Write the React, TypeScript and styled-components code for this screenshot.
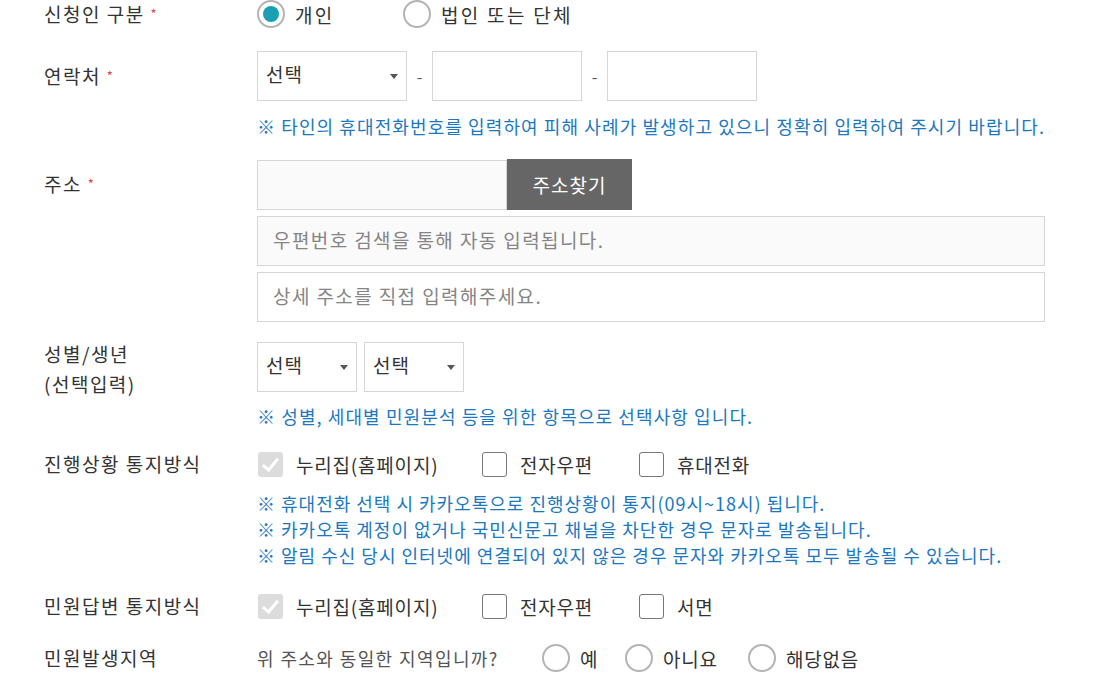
import styled, { createGlobalStyle } from "styled-components";

const GlobalStyle = createGlobalStyle`
  body {
    margin: 0;
    background: #fff;
    font-family: "Noto Sans CJK KR", "Noto Sans", sans-serif;
    color: #333;
  }
`;

export default function App() {
  return (
    <>
      <GlobalStyle />
      <Form>
        <Row $center>
          <Label>
            신청인 구분 <Star>*</Star>
          </Label>
          <Options>
            <Choice $width={146} $wide>
              <Radio $checked />
              개인
            </Choice>
            <Choice $wide>
              <Radio />
              법인 또는 단체
            </Choice>
          </Options>
        </Row>

        <Row $top={23}>
          <FieldLabel>
            연락처 <Star>*</Star>
          </FieldLabel>
          <Field>
            <Line>
              <Select $width={150}>선택</Select>
              <Dash>-</Dash>
              <Input $width={150} />
              <Dash>-</Dash>
              <Input $width={150} />
            </Line>
            <Hint $top={13}>
              ※ 타인의 휴대전화번호를 입력하여 피해 사례가 발생하고 있으니 정확히 입력하여 주시기 바랍니다.
            </Hint>
          </Field>
        </Row>

        <Row $top={21}>
          <FieldLabel>
            주소 <Star>*</Star>
          </FieldLabel>
          <Field>
            <Line>
              <Input $width={250} $grey />
              <FindButton>주소찾기</FindButton>
            </Line>
            <Input $grey $top={6}>우편번호 검색을 통해 자동 입력됩니다.</Input>
            <Input $top={6}>상세 주소를 직접 입력해주세요.</Input>
          </Field>
        </Row>

        <Row $top={20}>
          <TwoLineLabel>
            성별/생년
            <br />
            (선택입력)
          </TwoLineLabel>
          <Field>
            <Line $gap={7}>
              <Select $width={100}>선택</Select>
              <Select $width={100}>선택</Select>
            </Line>
            <Hint $top={12}>※ 성별, 세대별 민원분석 등을 위한 항목으로 선택사항 입니다.</Hint>
          </Field>
        </Row>

        <Row $top={22}>
          <Label>진행상황 통지방식</Label>
          <Field>
            <Options>
              <Choice $width={224}>
                <Check $disabled />
                누리집(홈페이지)
              </Choice>
              <Choice $width={157}>
                <Check />
                전자우편
              </Choice>
              <Choice>
                <Check />
                휴대전화
              </Choice>
            </Options>
            <Hints>
              <Hint $tight>※ 휴대전화 선택 시 카카오톡으로 진행상황이 통지(09시~18시) 됩니다.</Hint>
              <Hint $tight>※ 카카오톡 계정이 없거나 국민신문고 채널을 차단한 경우 문자로 발송됩니다.</Hint>
              <Hint $tight>※ 알림 수신 당시 인터넷에 연결되어 있지 않은 경우 문자와 카카오톡 모두 발송될 수 있습니다.</Hint>
            </Hints>
          </Field>
        </Row>

        <Row $top={24} $center>
          <Label>민원답변 통지방식</Label>
          <Options>
            <Choice $width={224}>
              <Check $disabled />
              누리집(홈페이지)
            </Choice>
            <Choice $width={157}>
              <Check />
              전자우편
            </Choice>
            <Choice>
              <Check />
              서면
            </Choice>
          </Options>
        </Row>

        <Row $top={24} $center>
          <Label>민원발생지역</Label>
          <Options>
            <Question>위 주소와 동일한 지역입니까?</Question>
            <Choice $width={83}>
              <Radio />
              예
            </Choice>
            <Choice $width={123}>
              <Radio />
              아니요
            </Choice>
            <Choice>
              <Radio />
              해당없음
            </Choice>
          </Options>
        </Row>
      </Form>
    </>
  );
}

const Form = styled.div`
  width: 1001px;
  padding-left: 44px;
`;

const Row = styled.div<{ $top?: number; $center?: boolean }>`
  display: grid;
  grid-template-columns: 213px 1fr;
  align-items: ${(p) => (p.$center ? "center" : "start")};

  margin-top: ${(p) => p.$top || 0}px;
`;

const Label = styled.div`
  font-size: 19px;
  letter-spacing: 1.5px;
  line-height: 28px;
  color: #333;
  white-space: nowrap;
`;

const FieldLabel = styled(Label)`
  line-height: 50px;
`;

const TwoLineLabel = styled(Label)`
  margin-top: -3px;
  line-height: 30px;
`;

const Star = styled.span`
  color: #e2474b;
  font-size: 13px;
  vertical-align: 3px;
`;

const Field = styled.div`
  display: flex;
  flex-direction: column;
`;

const Line = styled.div<{ $gap?: number }>`
  display: flex;
  align-items: center;
  gap: ${(p) => p.$gap || 0}px;
`;

const Select = styled.div<{ $width: number }>`
  position: relative;
  box-sizing: border-box;

  width: ${(p) => p.$width}px;
  height: 50px;
  padding-left: 8px;

  border: 1px solid #d6d6d6;
  background: #fff;

  font-size: 19px;
  letter-spacing: 1px;
  line-height: 44px;
  color: #333;

  &::after {
    content: "";
    position: absolute;
    right: 8px;
    top: 22px;
    border-left: 4.5px solid transparent;
    border-right: 4.5px solid transparent;
    border-top: 5px solid #555;
  }
`;

const Dash = styled.span`
  width: 25px;
  text-align: center;
  font-size: 16px;
  color: #555;
  line-height: 44px;
`;

const Input = styled.div<{ $width?: number; $grey?: boolean; $top?: number }>`
  box-sizing: border-box;

  width: ${(p) => (p.$width ? `${p.$width}px` : "788px")};
  height: 50px;
  margin-top: ${(p) => p.$top || 0}px;
  padding-left: 15px;

  border: 1px solid #d6d6d6;
  background: ${(p) => (p.$grey ? "#fafafa" : "#fff")};

  font-size: 19px;
  letter-spacing: 1.4px;
  line-height: 46px;
  color: #858585;
`;

const FindButton = styled.div`
  display: flex;
  align-items: center;
  justify-content: center;

  width: 125px;
  height: 51px;

  background: #666;
  color: #fff;

  font-size: 19px;
  letter-spacing: 1px;
`;

const Hint = styled.div<{ $top?: number; $tight?: boolean }>`
  margin-top: ${(p) => p.$top || 0}px;

  font-size: 18px;
  letter-spacing: ${(p) => (p.$tight ? 1 : 1.1)}px;
  line-height: ${(p) => (p.$tight ? 26 : 24)}px;
  color: #1b78c0;
  white-space: nowrap;
`;

const Hints = styled.div`
  margin-top: 12px;
`;

const Options = styled.div`
  display: flex;
  align-items: center;
  height: 28px;
`;

const Choice = styled.label<{ $width?: number; $wide?: boolean }>`
  display: flex;
  align-items: center;
  gap: 10px;

  width: ${(p) => (p.$width ? `${p.$width}px` : "auto")};

  font-size: 19px;
  letter-spacing: ${(p) => (p.$wide ? 2.3 : 0.8)}px;
  color: #333;
  white-space: nowrap;
`;

const Radio = styled.span<{ $checked?: boolean }>`
  position: relative;
  box-sizing: border-box;
  flex: none;

  width: 28px;
  height: 28px;

  border: 2px solid #b4b4b4;
  border-radius: 50%;
  background: #fff;

  &::after {
    content: "";
    display: ${(p) => (p.$checked ? "block" : "none")};
    position: absolute;
    left: 4px;
    top: 4px;
    width: 16px;
    height: 16px;
    border-radius: 50%;
    background: #1aa0b5;
  }
`;

const Check = styled.span<{ $disabled?: boolean }>`
  position: relative;
  box-sizing: border-box;
  flex: none;

  width: 25px;
  height: 25px;
  margin-left: 1px;
  margin-right: 3px;

  border: ${(p) => (p.$disabled ? "none" : "1.5px solid #777")};
  border-radius: 3px;
  background: ${(p) => (p.$disabled ? "#dcdcdc" : "#fff")};

  &::after {
    content: "";
    display: ${(p) => (p.$disabled ? "block" : "none")};
    position: absolute;
    left: 8px;
    top: 3px;
    width: 6px;
    height: 13px;
    border-right: 3px solid #fff;
    border-bottom: 3px solid #fff;
    transform: rotate(40deg);
  }
`;

const Question = styled.span`
  width: 285px;
  font-size: 18px;
  letter-spacing: 1.4px;
  color: #555;
  white-space: nowrap;
`;
